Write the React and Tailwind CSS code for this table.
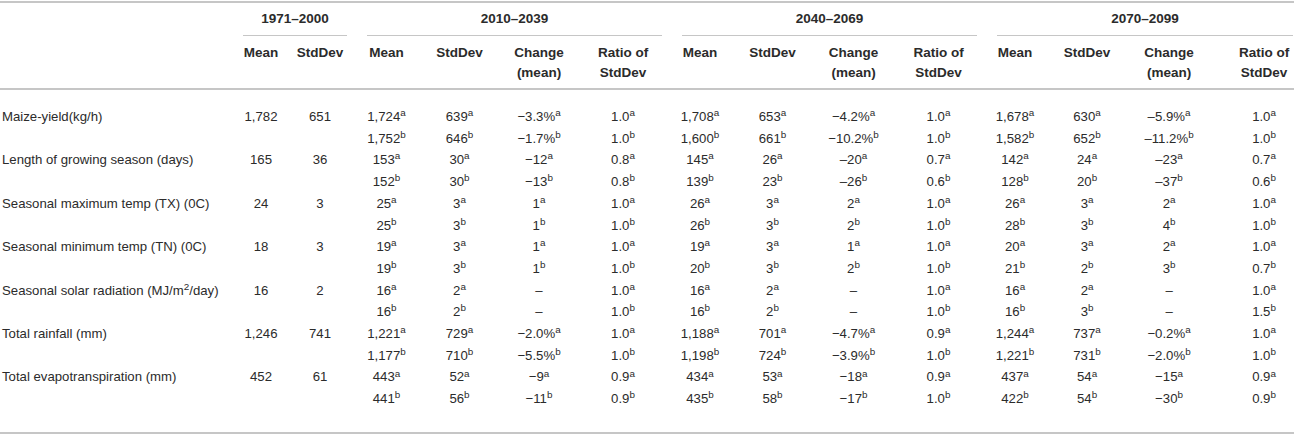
import React from "react";

const rows = [
  {
    label: "Maize-yield(kg/h)",
    base: ["1,782", "651"],
    a: ["1,724", "639", "−3.3%", "1.0", "1,708", "653", "−4.2%", "1.0", "1,678", "630", "–5.9%", "1.0"],
    b: ["1,752", "646", "−1.7%", "1.0", "1,600", "661", "−10.2%", "1.0", "1,582", "652", "–11.2%", "1.0"],
  },
  {
    label: "Length of growing season (days)",
    base: ["165", "36"],
    a: ["153", "30", "−12", "0.8", "145", "26", "–20", "0.7", "142", "24", "–23", "0.7"],
    b: ["152", "30", "−13", "0.8", "139", "23", "–26", "0.6", "128", "20", "–37", "0.6"],
  },
  {
    label: "Seasonal maximum temp (TX) (0C)",
    base: ["24", "3"],
    a: ["25", "3", "1", "1.0", "26", "3", "2", "1.0", "26", "3", "2", "1.0"],
    b: ["25", "3", "1", "1.0", "26", "3", "2", "1.0", "28", "3", "4", "1.0"],
  },
  {
    label: "Seasonal minimum temp (TN) (0C)",
    base: ["18", "3"],
    a: ["19", "3", "1", "1.0", "19", "3", "1", "1.0", "20", "3", "2", "1.0"],
    b: ["19", "3", "1", "1.0", "20", "3", "2", "1.0", "21", "2", "3", "0.7"],
  },
  {
    label: (
      <>
        Seasonal solar radiation (MJ/m<sup>2</sup>/day)
      </>
    ),
    base: ["16", "2"],
    a: ["16", "2", "–", "1.0", "16", "2", "–", "1.0", "16", "2", "–", "1.0"],
    b: ["16", "2", "–", "1.0", "16", "2", "–", "1.0", "16", "3", "–", "1.5"],
  },
  {
    label: "Total rainfall (mm)",
    base: ["1,246", "741"],
    a: ["1,221", "729", "−2.0%", "1.0", "1,188", "701", "−4.7%", "0.9", "1,244", "737", "−0.2%", "1.0"],
    b: ["1,177", "710", "−5.5%", "1.0", "1,198", "724", "−3.9%", "1.0", "1,221", "731", "−2.0%", "1.0"],
  },
  {
    label: "Total evapotranspiration (mm)",
    base: ["452", "61"],
    a: ["443", "52", "−9", "0.9", "434", "53", "−18", "0.9", "437", "54", "−15", "0.9"],
    b: ["441", "56", "−11", "0.9", "435", "58", "−17", "1.0", "422", "54", "−30", "0.9"],
  },
];

const groups = [
  { title: "1971–2000", span: 2, line: "ml-[10px] mr-[4px]" },
  { title: "2010–2039", span: 4, line: "ml-[16px] mr-[3px]" },
  { title: "2040–2069", span: 4, line: "ml-[17px] mr-[3px]" },
  { title: "2070–2099", span: 4, line: "ml-[17px] mr-[21px]" },
];

const sub4 = [
  ["Mean"],
  ["StdDev"],
  ["Change", "(mean)"],
  ["Ratio of", "StdDev"],
];

function Val({ v, s }) {
  if (v === "–") return <span>–</span>;
  return (
    <span>
      {v}
      <sup>{s}</sup>
    </span>
  );
}

export default function App() {
  const subHeads = [["Mean"], ["StdDev"], ...sub4, ...sub4, ...sub4];
  return (
    <div className="w-[1294px] h-[435px] overflow-hidden bg-white pt-px text-[#2b2b2b] font-['Liberation_Sans',Arial,Helvetica,sans-serif] text-[13.2px]">
      <table className="table-fixed border-collapse w-[1314px] border-t-2 border-[#c6c6c6]">
        <colgroup>
          <col className="w-[233px]" />
          <col className="w-[56px]" />
          <col className="w-[62px]" />
          <col className="w-[71px]" />
          <col className="w-[75px]" />
          <col className="w-[84px]" />
          <col className="w-[84px]" />
          <col className="w-[70px]" />
          <col className="w-[75px]" />
          <col className="w-[87px]" />
          <col className="w-[83px]" />
          <col className="w-[70px]" />
          <col className="w-[74px]" />
          <col className="w-[90px]" />
          <col className="w-[100px]" />
        </colgroup>
        <thead>
          <tr>
            <th className="p-0"></th>
            {groups.map((g) => (
              <th key={g.title} colSpan={g.span} className="p-0 font-bold align-top text-[13.5px]">
                <div className={g.line}>
                  <div className="h-[32px] flex items-center justify-center leading-none">{g.title}</div>
                  <div className="h-px bg-[#c6c6c6]"></div>
                </div>
              </th>
            ))}
          </tr>
          <tr className="border-b-2 border-[#c6c6c6]">
            <th className="p-0 h-[53px]"></th>
            {subHeads.map((h, i) => (
              <th key={i} className="p-0 pt-[7px] align-top font-bold text-[13.5px] leading-[20px] text-center">
                {h.map((t, j) => (
                  <div key={j}>{t}</div>
                ))}
              </th>
            ))}
          </tr>
        </thead>
        <tbody>
          <tr>
            <td colSpan={15} className="h-[17px] p-0"></td>
          </tr>
          {rows.map((r, ri) => (
            <React.Fragment key={ri}>
              <tr className="h-[21.7px] leading-[21.7px]">
                <td className="p-0 pl-[2px] text-left whitespace-nowrap">{r.label}</td>
                <td className="p-0 text-center">{r.base[0]}</td>
                <td className="p-0 text-center">{r.base[1]}</td>
                {r.a.map((v, i) => (
                  <td key={i} className="p-0 text-center whitespace-nowrap">
                    <Val v={v} s="a" />
                  </td>
                ))}
              </tr>
              <tr className="h-[21.7px] leading-[21.7px]">
                <td className="p-0"></td>
                <td className="p-0"></td>
                <td className="p-0"></td>
                {r.b.map((v, i) => (
                  <td key={i} className="p-0 text-center whitespace-nowrap">
                    <Val v={v} s="b" />
                  </td>
                ))}
              </tr>
            </React.Fragment>
          ))}
          <tr className="border-b-2 border-[#c6c6c6]">
            <td colSpan={15} className="h-[23px] p-0"></td>
          </tr>
        </tbody>
      </table>
    </div>
  );
}
